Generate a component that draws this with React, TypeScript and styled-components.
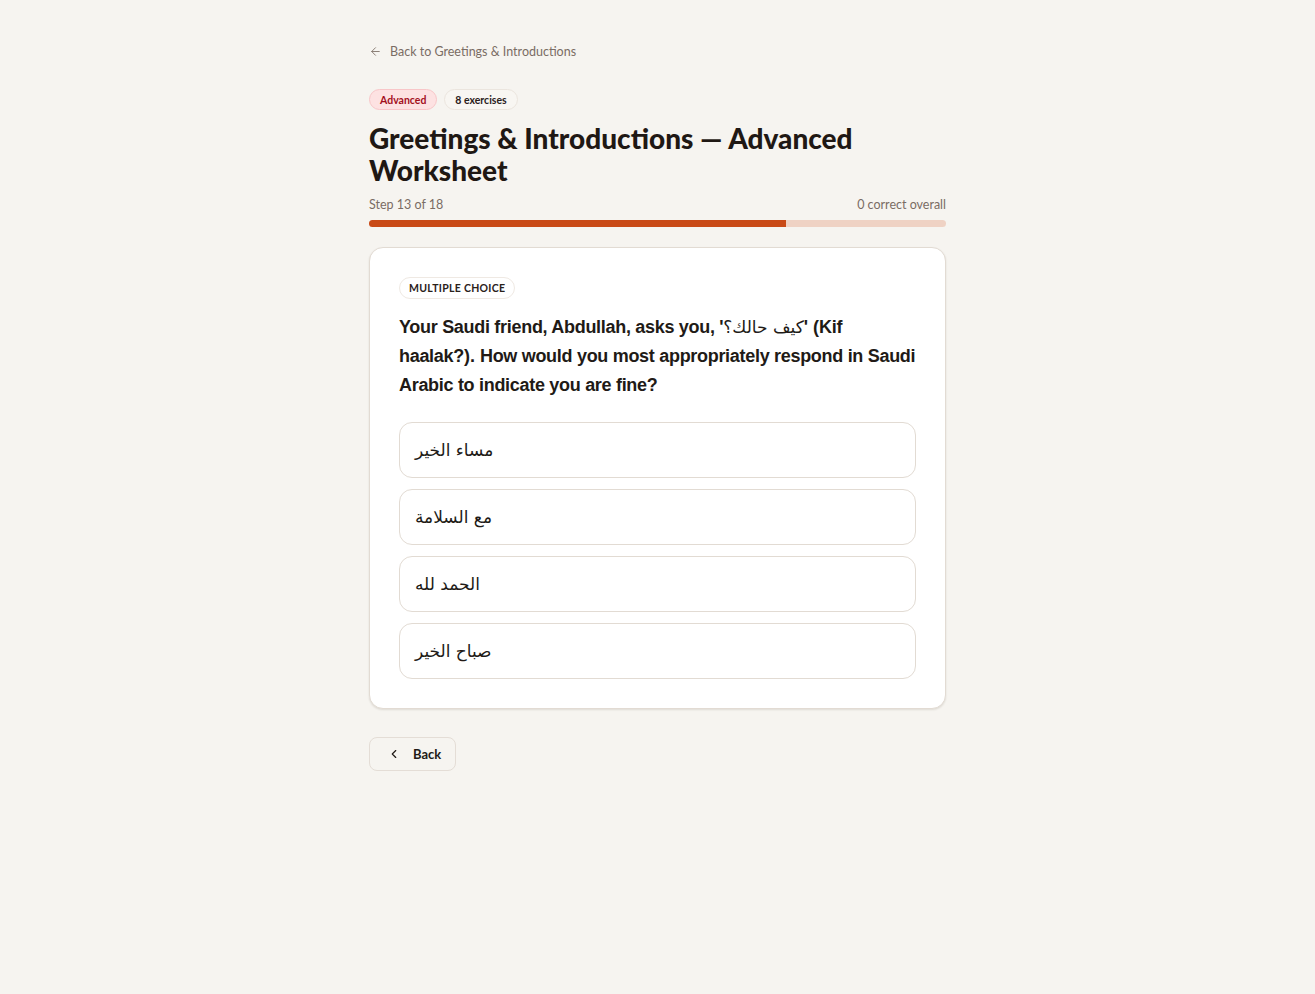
import styled, { createGlobalStyle } from "styled-components";
import { ArrowLeft, ChevronLeft } from "lucide-react";

const GlobalStyle = createGlobalStyle`
  html, body {
    margin: 0;
    padding: 0;
    background: #f6f4f0;
  }
  body {
    font-family: "Lato", "Noto Sans", sans-serif;
    color: #211a16;
  }
`;

const options = ["مساء الخير", "مع السلامة", "الحمد لله", "صباح الخير"];

const step = 13;
const total = 18;

const App = () => {
  return (
    <>
      <GlobalStyle />
      <Page>
        <BackLink>
          <ArrowLeft size={13} strokeWidth={1.8} />
          <span>Back to Greetings &amp; Introductions</span>
        </BackLink>
        <Tags>
          <Tag $tone="level">Advanced</Tag>
          <Tag>8 exercises</Tag>
        </Tags>
        <Title>Greetings &amp; Introductions — Advanced Worksheet</Title>
        <StepRow>
          <span>
            Step {step} of {total}
          </span>
          <span>0 correct overall</span>
        </StepRow>
        <Track>
          <Fill style={{ width: `${(step / total) * 100}%` }} />
        </Track>
        <Card>
          <Kind>Multiple choice</Kind>
          <Question>
            Your Saudi friend, Abdullah, asks you, '<Arabic>كيف حالك؟</Arabic>'
            (Kif haalak?). How would you most appropriately respond in Saudi
            Arabic to indicate you are fine?
          </Question>
          <Options>
            {options.map((o) => (
              <Option key={o}>
                <bdi>{o}</bdi>
              </Option>
            ))}
          </Options>
        </Card>
        <Footer>
          <BackButton>
            <ChevronLeft size={14} strokeWidth={2} />
            Back
          </BackButton>
        </Footer>
      </Page>
    </>
  );
};

const Page = styled.div`
  width: 577px;
  margin: 0 auto;
  padding-top: 42px;
  padding-bottom: 80px;
`;

const BackLink = styled.a`
  display: inline-flex;
  align-items: center;
  gap: 8px;
  font-size: 12.5px;
  color: #7a6c64;
  cursor: pointer;
  svg {
    color: #8a7d75;
  }
`;

const Tags = styled.div`
  display: flex;
  gap: 7px;
  margin-top: 28px;
`;

const Tag = styled.span<{ $tone?: "level" }>`
  display: inline-flex;
  align-items: center;
  height: 19px;
  padding: 0 10px;
  border-radius: 999px;
  font-size: 10.5px;
  font-weight: 700;
  border: 1px solid ${(p) => (p.$tone === "level" ? "#f8c6c8" : "#ebe5de")};
  background: ${(p) => (p.$tone === "level" ? "#fde2e2" : "#f8f6f2")};
  color: ${(p) => (p.$tone === "level" ? "#a3101c" : "#2a211b")};
`;

const Title = styled.h1`
  margin: 12px 0 0;
  font-size: 28px;
  line-height: 32px;
  font-weight: 900;
  letter-spacing: 0;
  color: #1f1814;
  max-width: 500px;
`;

const StepRow = styled.div`
  display: flex;
  justify-content: space-between;
  margin-top: 11px;
  font-size: 12.5px;
  color: #7a6c64;
`;

const Track = styled.div`
  margin-top: 8px;
  height: 7px;
  border-radius: 4px;
  background: #efd2c4;
  overflow: hidden;
`;

const Fill = styled.div`
  height: 100%;
  background: #c94a16;
`;

const Card = styled.div`
  margin-top: 20px;
  background: #ffffff;
  border: 1px solid #e2dbd3;
  border-radius: 14px;
  box-shadow: 0 1px 2px rgba(60, 40, 20, 0.12);
  padding: 28px 29px 29px;
`;

const Kind = styled.span`
  display: inline-flex;
  align-items: center;
  height: 20px;
  padding: 0 9px;
  border: 1px solid #efe9e3;
  border-radius: 999px;
  font-size: 10.5px;
  font-weight: 700;
  text-transform: uppercase;
  letter-spacing: 0.3px;
  color: #2a211b;
`;

const Question = styled.p`
  margin: 14px 0 0;
  font-family: "Liberation Sans", Arial, "DejaVu Sans", sans-serif;
  font-size: 18px;
  line-height: 29px;
  font-weight: 700;
  letter-spacing: -0.3px;
  color: #211a16;
`;

const Arabic = styled.bdi`
  font-family: "DejaVu Sans", sans-serif;
  font-weight: 400;
  font-size: 17px;
  letter-spacing: 0;
`;

const Options = styled.div`
  display: flex;
  flex-direction: column;
  gap: 11px;
  margin-top: 22px;
`;

const Option = styled.button`
  display: flex;
  align-items: center;
  height: 56px;
  padding: 0 15px;
  background: #ffffff;
  border: 1px solid #e2dbd3;
  border-radius: 13px;
  font-family: "DejaVu Sans", "Noto Sans", sans-serif;
  font-size: 17px;
  color: #211a16;
  text-align: left;
  cursor: pointer;
`;

const Footer = styled.div`
  margin-top: 28px;
`;

const BackButton = styled.button`
  display: inline-flex;
  align-items: center;
  gap: 12px;
  height: 34px;
  padding: 0 14px 0 17px;
  border: 1px solid #e4ddd6;
  border-radius: 8px;
  background: #f6f4f0;
  font-family: "Lato", sans-serif;
  font-size: 13px;
  font-weight: 700;
  color: #211a16;
  cursor: pointer;
`;

export default App;
